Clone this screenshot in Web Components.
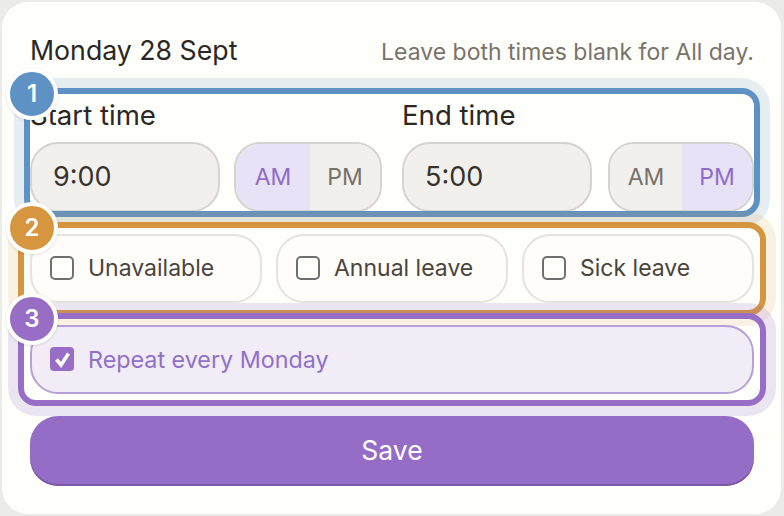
<!DOCTYPE html>
<html>
<head>
<meta charset="utf-8">
<title>Leave</title>
<style>
  html, body { margin: 0; padding: 0; background: #ebebe8; }
  body { padding: 2px 3px 2px 2px; font-family: Inter, "Noto Sans", sans-serif; }
</style>
</head>
<body>
<leave-card>
  <day-header slot="header" day="Monday 28 Sept" hint="Leave both times blank for All day."></day-header>
  <hl-region num="1" color="95,146,196" ring="-14px -6px -5px -6px" halo="10px" halo-alpha=".15" badge-top="-34">
    <div style="display:grid;grid-template-columns:352px 352px;column-gap:20px">
      <time-field label="Start time" value="9:00" active="AM" gap="14"></time-field>
      <time-field label="End time" value="5:00" active="PM" gap="16"></time-field>
    </div>
  </hl-region>
  <hl-region num="2" color="213,150,63" ring="-12px -12px -13px -12px" halo="10px" halo-alpha=".12" badge-top="-32">
    <div style="display:grid;grid-template-columns:repeat(3,232px);column-gap:14px">
      <check-pill>Unavailable</check-pill>
      <check-pill>Annual leave</check-pill>
      <check-pill>Sick leave</check-pill>
    </div>
  </hl-region>
  <hl-region num="3" color="151,109,198" ring="-12px -12px -12px -12px" halo="10px" halo-alpha=".18" badge-top="-32">
    <check-pill checked>Repeat every Monday</check-pill>
  </hl-region>
  <save-button>Save</save-button>
</leave-card>

<script>
const cardTpl = document.createElement("template");
cardTpl.innerHTML = `
<style>
  :host {
    display: flex;
    flex-direction: column;
    gap: 22px;
    box-sizing: border-box;
    width: 779px;
    height: 512px;
    padding: 33px 27px 28px 28px;
    background: #fefefa;
    border-radius: 26px;
  }
</style>
<slot name="header"></slot>
<slot></slot>`;
class LeaveCard extends HTMLElement {
  constructor() {
    super();
    this.attachShadow({ mode: "open" }).appendChild(cardTpl.content.cloneNode(true));
  }
}
customElements.define("leave-card", LeaveCard);

class DayHeader extends HTMLElement {
  constructor() {
    super();
    this.attachShadow({ mode: "open" }).innerHTML = `
    <style>
      :host { display: flex; justify-content: space-between; align-items: baseline; height: 30px; margin-bottom: 15px; line-height: 30px; }
      .day { font-size: 26.7px; color: #2b2723; }
      .hint { font-size: 23px; color: #7a736b; }
    </style>
    <span class="day">${this.getAttribute("day")}</span>
    <span class="hint">${this.getAttribute("hint")}</span>`;
  }
}
customElements.define("day-header", DayHeader);

class HlRegion extends HTMLElement {
  constructor() {
    super();
    const rgb = this.getAttribute("color");
    this.attachShadow({ mode: "open" }).innerHTML = `
    <style>
      :host { display: block; position: relative; }
      .ring {
        position: absolute;
        inset: ${this.getAttribute("ring")};
        border: 6px solid rgb(${rgb});
        border-radius: 18px;
        box-shadow: 0 0 0 ${this.getAttribute("halo")} rgba(${rgb},${this.getAttribute("halo-alpha")});
        pointer-events: none;
      }
      .badge {
        position: absolute;
        left: -24px;
        top: ${this.getAttribute("badge-top")}px;
        box-sizing: border-box;
        width: 52px;
        height: 52px;
        border: 4px solid #fefefa;
        border-radius: 50%;
        background: rgb(${rgb});
        color: #fff;
        font-size: 24px;
        font-weight: 600;
        line-height: 44px;
        text-align: center;
        box-shadow: 0 1px 3px rgba(0,0,0,.12);
      }
    </style>
    <slot></slot>
    <div class="ring"></div>
    <div class="badge">${this.getAttribute("num")}</div>`;
  }
}
customElements.define("hl-region", HlRegion);

class TimeField extends HTMLElement {
  constructor() {
    super();
    const active = this.getAttribute("active");
    const seg = (name) => `<span class="seg ${active === name ? "on" : ""}">${name}</span>`;
    this.attachShadow({ mode: "open" }).innerHTML = `
    <style>
      :host { display: block; }
      .label { height: 26px; line-height: 26px; margin-bottom: 14px; font-size: 27.6px; color: #2b2723; }
      .row { display: flex; gap: ${this.getAttribute("gap")}px; }
      .input {
        flex: none;
        width: 190px;
        box-sizing: border-box;
        height: 70px;
        padding-left: 21px;
        border: 2px solid #d5d3cd;
        border-radius: 28px;
        background: #f1f0ec;
        color: #37322c;
        font-size: 27px;
        line-height: 66px;
      }
      .ampm {
        display: flex;
        flex: 1;
        box-sizing: border-box;
        height: 70px;
        border: 2px solid #d5d3cd;
        border-radius: 26px;
        overflow: hidden;
      }
      .seg { flex: 1; text-align: center; background: #f1f0ec; color: #77726a; font-size: 23px; line-height: 66px; }
      .seg:last-child { flex: none; width: 70px; }
      .seg.on { background: #e8e2f6; color: #8f6cc8; }
    </style>
    <div class="label">${this.getAttribute("label")}</div>
    <div class="row">
      <div class="input">${this.getAttribute("value")}</div>
      <div class="ampm">${seg("AM")}${seg("PM")}</div>
    </div>`;
  }
}
customElements.define("time-field", TimeField);

class CheckPill extends HTMLElement {
  constructor() {
    super();
    const on = this.hasAttribute("checked");
    const tick = on ? `<svg width="24" height="24" viewBox="0 0 24 24"><rect width="24" height="24" rx="4" fill="#976dc6"/><path d="M6.5 12.5l4.5 5.5 7.5-11.5" fill="none" stroke="#fff" stroke-width="3.6"/></svg>`
      : `<svg width="24" height="24" viewBox="0 0 24 24"><rect x="1" y="1" width="22" height="22" rx="4" fill="#fefefa" stroke="#6f6f6f" stroke-width="2"/></svg>`;
    this.attachShadow({ mode: "open" }).innerHTML = `
    <style>
      :host {
        display: flex;
        align-items: center;
        gap: 14px;
        box-sizing: border-box;
        height: 69px;
        padding: 0 0 ${on ? 1 : 2}px 18px;
        border: 2px solid ${on ? "#b79fd8" : "#e4e3de"};
        border-radius: 28px;
        background: ${on ? "#f1ecf6" : "#fefdf9"};
        color: ${on ? "#9070c8" : "#4a443d"};
        font-size: ${on ? 23.3 : 23}px;
      }
      svg { display: block; flex: none; }
    </style>
    ${tick}<slot></slot>`;
  }
}
customElements.define("check-pill", CheckPill);

class SaveButton extends HTMLElement {
  constructor() {
    super();
    this.attachShadow({ mode: "open" }).innerHTML = `
    <style>
      :host {
        display: block;
        box-sizing: border-box;
        height: 70px;
        border-radius: 28px;
        background: #966dc6;
        box-shadow: inset 0 -2px 0 #7d5aa8;
        color: #fff;
        font-size: 26.5px;
        line-height: 68px;
        text-align: center;
      }
    </style>
    <slot></slot>`;
  }
}
customElements.define("save-button", SaveButton);
</script>
</body>
</html>
